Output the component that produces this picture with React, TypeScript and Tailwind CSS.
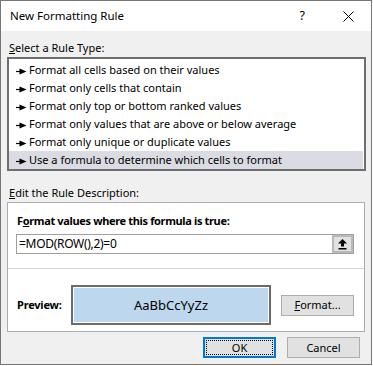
import { FC } from "react";

const rules = [
  "Format all cells based on their values",
  "Format only cells that contain",
  "Format only top or bottom ranked values",
  "Format only values that are above or below average",
  "Format only unique or duplicate values",
  "Use a formula to determine which cells to format",
];

const Bullet: FC = () => (
  <svg width="11" height="7" viewBox="0 0 11 7" className="mr-[2px] mt-[2px] shrink-0">
    <line x1="0" y1="3.5" x2="4" y2="3.5" stroke="#000" strokeWidth="1.2" />
    <polygon points="3.5,0.5 10.5,3.5 3.5,6.5" fill="#000" />
  </svg>
);

const App: FC = () => {
  const selected = 5;

  return (
    <div className="h-[366px] w-[373px] bg-white font-['Noto_Sans',sans-serif] text-[11px] leading-[16px] text-black">
      <div className="flex h-[365px] w-[372px] flex-col border border-[#767676] bg-[#f0f0f0]">
        {/* title bar */}
        <div className="flex h-[30px] shrink-0 items-center bg-white pl-[9px]">
          <span className="text-[11.5px]">New Formatting Rule</span>
          <span className="ml-auto mr-[38px] text-[12.5px]">?</span>
          <svg width="11" height="11" viewBox="0 0 11 11" className="mr-[17px]">
            <path d="M0.5 0.5 L10.5 10.5 M10.5 0.5 L0.5 10.5" stroke="#000" strokeWidth="1" />
          </svg>
        </div>

        <div className="flex flex-1 flex-col px-[6px]">
          <div className="mt-[9px] h-[16px] pl-[2px]">
            <span className="underline">S</span>elect a Rule Type:
          </div>
          <div className="mt-px flex h-[114px] w-[359px] flex-col border-2 border-[#6e6e6e] bg-white pt-[2px]">
            {rules.map((r, i) => (
              <div
                key={r}
                className={`flex h-[18px] items-center pl-[7px] ${
                  i === selected ? "mr-px bg-[#dadbe3]" : ""
                }`}
              >
                <Bullet />
                <span>{r}</span>
              </div>
            ))}
          </div>

          <div className="mt-[14px] h-[16px] pl-[2px]">
            <span className="underline">E</span>dit the Rule Description:
          </div>
          <div className="mt-px flex h-[130px] w-[358px] flex-col border border-[#adadad] bg-white">
            <div className="mt-[10px] h-[16px] pl-[9px] font-bold tracking-[-0.35px]">
              F<span className="underline">o</span>rmat values where this formula is true:
            </div>
            <div className="ml-[8px] mt-[5px] flex h-[20px] w-[338px] items-stretch border border-[#a0a0a0] bg-white">
              <div className="flex flex-1 items-center pl-[2px] text-[12px] tracking-[-0.3px]">
                =MOD(ROW(),2)=0
              </div>
              <div className="flex w-[21px] items-center justify-center border-2 border-[#b9b9b9] bg-[#e1e1e1]">
                <svg width="9" height="11" viewBox="0 0 9 11">
                  <polygon points="4.5,0 9,4.5 6,4.5 6,7.5 3,7.5 3,4.5 0,4.5" fill="#000" />
                  <rect x="0.5" y="9" width="8" height="1.5" fill="#000" />
                </svg>
              </div>
            </div>
            <div className="mt-[14px] h-px bg-[#d4d4d4]" />
            <div className="mt-[16px] flex items-center pl-[9px]">
              <span className="w-[54px] font-bold tracking-[-0.2px]">Preview:</span>
              <div className="h-[40px] w-[200px] border-2 border-[#6b6b6b] bg-white p-px">
                <div className="flex h-full items-center justify-center bg-[#bdd7ee] text-[13px]">
                  AaBbCcYyZz
                </div>
              </div>
              <button className="ml-[10px] flex h-[21px] w-[73px] items-center justify-center border border-[#adadad] bg-[#e1e1e1]">
                <span className="underline">F</span>ormat...
              </button>
            </div>
          </div>

          <div className="mt-[5px] flex justify-end gap-[11px] pr-[5px]">
            <button className="flex h-[21px] w-[73px] items-center justify-center border-2 border-[#0078d7] bg-[#e1e1e1] outline-1 outline-offset-[-4px] outline-dotted outline-black">
              OK
            </button>
            <button className="flex h-[21px] w-[73px] items-center justify-center border border-[#adadad] bg-[#e1e1e1]">
              Cancel
            </button>
          </div>
        </div>
      </div>
    </div>
  );
};

export default App;
